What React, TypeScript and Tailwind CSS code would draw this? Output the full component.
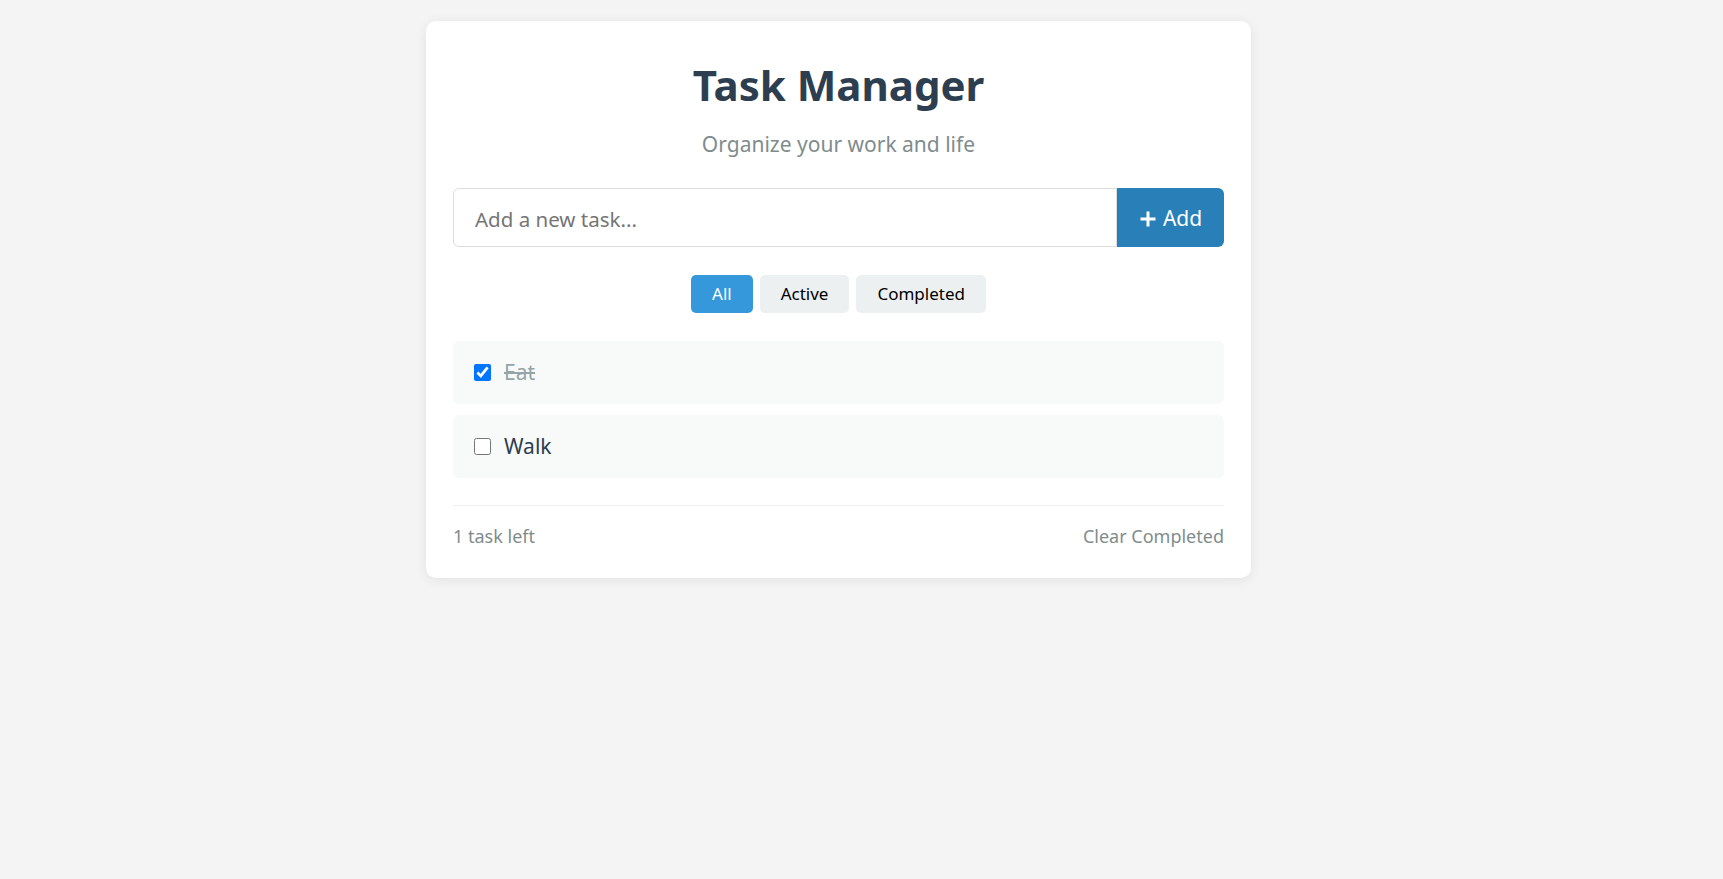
import React, { useState } from 'react';

type Task = { id: number; text: string; done: boolean };
type Filter = 'all' | 'active' | 'completed';

const font = { fontFamily: '"Noto Sans", "Open Sans", Arial, sans-serif' };

const App: React.FC = () => {
  const [tasks, setTasks] = useState<Task[]>([
    { id: 1, text: 'Eat', done: true },
    { id: 2, text: 'Walk', done: false },
  ]);
  const [input, setInput] = useState('');
  const [filter, setFilter] = useState<Filter>('all');

  const addTask = () => {
    if (!input.trim()) return;
    setTasks((prev) => [...prev, { id: Date.now(), text: input.trim(), done: false }]);
    setInput('');
  };

  const toggle = (id: number) =>
    setTasks((prev) => prev.map((t) => (t.id === id ? { ...t, done: !t.done } : t)));

  const clearCompleted = () => setTasks((prev) => prev.filter((t) => !t.done));

  const visible = tasks.filter((t) =>
    filter === 'all' ? true : filter === 'active' ? !t.done : t.done
  );
  const left = tasks.filter((t) => !t.done).length;

  const filters: { key: Filter; label: string }[] = [
    { key: 'all', label: 'All' },
    { key: 'active', label: 'Active' },
    { key: 'completed', label: 'Completed' },
  ];

  return (
    <div className="min-h-screen bg-[#f4f4f4] flex justify-center pt-[21px] pr-[46px]" style={font}>
      <div className="w-[825px] self-start bg-white rounded-[10px] shadow-[0_2px_12px_rgba(0,0,0,0.08)] px-[27px] pt-[34px] pb-[28px]">
        {/* Header */}
        <h1 className="text-center text-[42px] leading-[60px] font-bold text-[#2c3e50]">Task Manager</h1>
        <p className="text-center text-[21px] leading-[28px] text-[#7f8c8d] mt-[15px]">Organize your work and life</p>

        {/* Input row */}
        <div className="flex mt-[30px]">
          <input
            value={input}
            onChange={(e) => setInput(e.target.value)}
            onKeyDown={(e) => e.key === 'Enter' && addTask()}
            placeholder="Add a new task..."
            className="flex-1 h-[59px] border border-[#dddddd] rounded-l-[6px] px-[21px] pt-[3px] text-[20.5px] text-[#333] placeholder:text-[#757575] outline-none"
          />
          <button
            onClick={addTask}
            className="w-[107px] h-[59px] bg-[#2980b9] text-white rounded-r-[6px] flex items-center justify-center gap-[6px] pt-[3px] text-[21px]"
          >
            <svg width="18" height="18" viewBox="0 0 18 18">
              <path d="M9 1.5v15M1.5 9h15" stroke="white" strokeWidth="3" />
            </svg>
            Add
          </button>
        </div>

        {/* Filters */}
        <div className="flex justify-center gap-[7px] mt-[28px]">
          {filters.map((f) => (
            <button
              key={f.key}
              onClick={() => setFilter(f.key)}
              className={
                filter === f.key
                  ? 'h-[38px] px-[21px] rounded-[5px] text-[17px] bg-[#3498db] text-white'
                  : 'h-[38px] px-[21px] rounded-[5px] text-[17px] bg-[#ecf0f1] text-black'
              }
            >
              {f.label}
            </button>
          ))}
        </div>

        {/* Task list */}
        <ul className="flex flex-col gap-[11px] mt-[28px]">
          {visible.map((t) => (
            <li key={t.id} className="h-[63px] bg-[#f8f9f9] rounded-[6px] flex items-center px-[21px] gap-[13px]">
              <input
                type="checkbox"
                checked={t.done}
                onChange={() => toggle(t.id)}
                className="w-[17px] h-[17px] m-0"
              />
              <span
                className={
                  t.done
                    ? 'text-[21px] text-[#95a5a6] line-through'
                    : 'text-[21px] text-[#2c3e50]'
                }
              >
                {t.text}
              </span>
            </li>
          ))}
        </ul>

        {/* Footer */}
        <div className="mt-[27px] border-t border-[#eeeeee] pt-[17px] flex justify-between text-[18px] text-[#7f8c8d]">
          <span>{left} {left === 1 ? 'task' : 'tasks'} left</span>
          <button onClick={clearCompleted} className="text-[#7f8c8d]">Clear Completed</button>
        </div>
      </div>
    </div>
  );
};

export default App;
